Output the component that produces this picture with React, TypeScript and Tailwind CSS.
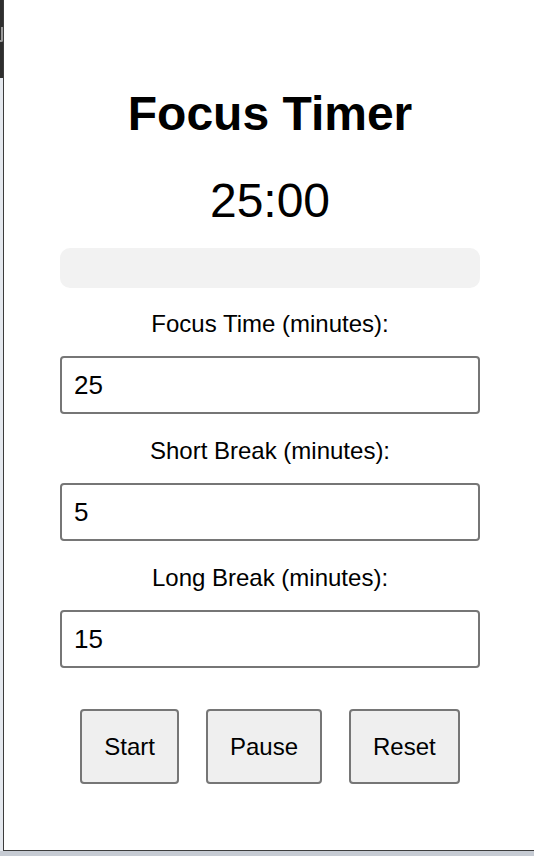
import React from "react";

const font = { fontFamily: '"Liberation Sans", Arial, Helvetica, sans-serif' };

function Field({ label, value, first }: { label: string; value: string; first?: boolean }) {
  return (
    <>
      <div className={`${first ? "mt-[22px]" : "mt-[23px]"} text-center text-[24px] leading-[27px] text-black`}>{label}</div>
      <div className="mt-[19px] flex h-[58px] w-[420px] items-center rounded-[4px] border-2 border-[#767676] bg-white px-[12px] text-[26px] leading-[30px] text-black">
        {value}
      </div>
    </>
  );
}

export default function App() {
  return (
    <div className="flex h-[856px] w-[534px] flex-col overflow-hidden bg-[#c6cbd3]" style={font}>
      <div className="flex h-[851px] w-full">
        <div className="flex w-[3px] flex-col">
          <div className="flex h-[78px] flex-col bg-[#2e2e2e]">
            <div className="mt-[27px] h-[15px] w-[3px] rounded-br-[2px] border-b-2 border-r-2 border-[#9a9a9a]"></div>
          </div>
          <div className="flex-1 bg-[#e4e8ee]"></div>
        </div>
        <div className="flex flex-1 flex-col border-b border-l border-[#3c3c3c] bg-white pl-[56px]">
          <div className="flex w-[420px] flex-col items-center">
            <div className="mt-[86px] text-[48px] font-bold leading-[56px] text-black">Focus Timer</div>
            <div className="mt-[31px] text-[48px] leading-[56px] text-black">25:00</div>
            <div className="mt-[19px] h-[40px] w-[420px] rounded-[10px] bg-[#f2f2f2]"></div>
            <Field label="Focus Time (minutes):" value="25" first />
            <Field label="Short Break (minutes):" value="5" />
            <Field label="Long Break (minutes):" value="15" />
            <div className="mt-[41px] flex gap-[27px]">
              {["Start", "Pause", "Reset"].map((b) => (
                <div
                  key={b}
                  className="flex h-[75px] items-center rounded-[4px] border-2 border-[#767676] bg-[#efefef] px-[22px] text-[24px] leading-[27px] text-black"
                >
                  {b}
                </div>
              ))}
            </div>
          </div>
        </div>
      </div>
    </div>
  );
}
